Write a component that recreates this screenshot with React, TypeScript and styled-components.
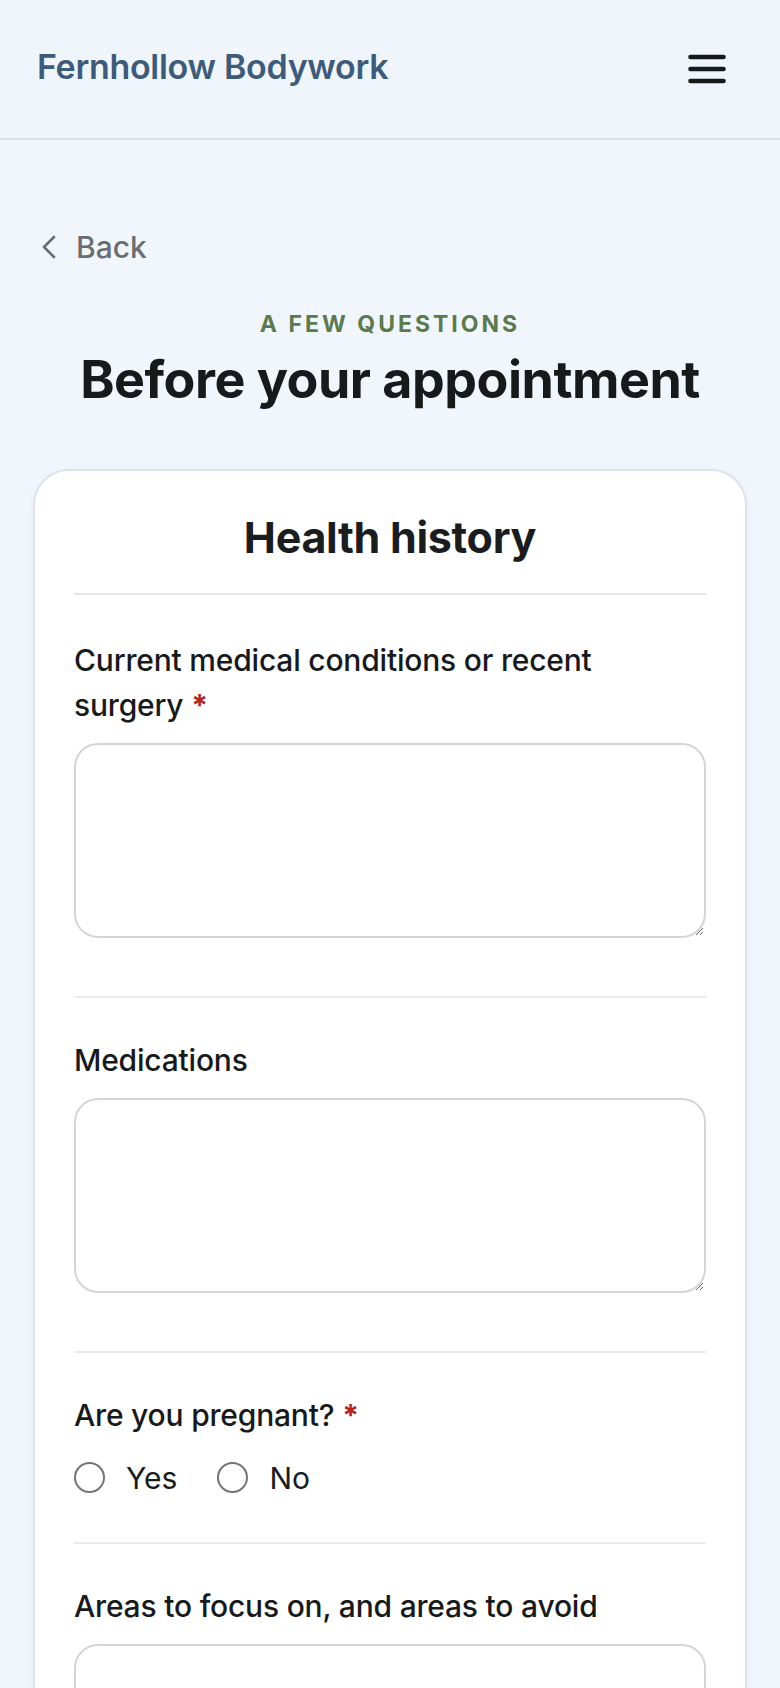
import React, { useState } from "react";
import styled, { createGlobalStyle } from "styled-components";

const GlobalStyle = createGlobalStyle`
  html, body {
    margin: 0;
    padding: 0;
    background: #f1f6fc;
  }
  body {
    font-family: Inter, "Noto Sans", "Liberation Sans", sans-serif;
    color: #1b1c1e;
  }
  * {
    box-sizing: border-box;
  }
`;

const Page = styled.div`
  min-height: 1688px;
  background: #f1f6fc;
`;

const TopBar = styled.header`
  height: 140px;
  display: flex;
  align-items: center;
  justify-content: space-between;
  padding: 0 54px 0 37px;
  border-bottom: 2px solid #dcdfe4;
  background: #f0f5fc;
`;

const Logo = styled.div`
  font-size: 34px;
  font-weight: 600;
  letter-spacing: -0.3px;
  color: #3e5c7a;
  margin-top: -6px;
`;

const MenuButton = styled.button`
  border: 0;
  background: none;
  padding: 0;
  display: flex;
  cursor: pointer;
`;

const Main = styled.main`
  padding: 88px 33px 40px;
`;

const BackLink = styled.a`
  display: inline-flex;
  align-items: center;
  gap: 19px;
  margin-left: 8px;
  font-size: 30px;
  font-weight: 500;
  line-height: 38px;
  color: #6b6d72;
  text-decoration: none;
`;

const Intro = styled.div`
  display: flex;
  flex-direction: column;
  align-items: center;
  margin-top: 41px;
`;

const Eyebrow = styled.div`
  font-size: 23px;
  line-height: 34px;
  font-weight: 700;
  letter-spacing: 3px;
  color: #5b7a4f;
`;

const Heading = styled.h1`
  margin: 9px 0 0;
  font-size: 52px;
  line-height: 60px;
  font-weight: 700;
  letter-spacing: -0.5px;
  color: #18191b;
`;

const Card = styled.section`
  margin-top: 59px;
  background: #ffffff;
  border: 2px solid #dfe3e9;
  border-radius: 36px;
  padding: 0 39px;
  box-shadow: 0 2px 8px rgba(30, 50, 80, 0.04);
`;

const CardTitle = styled.h2`
  margin: 0;
  padding: 40px 0 30px;
  text-align: center;
  font-size: 43px;
  line-height: 52px;
  font-weight: 700;
  letter-spacing: -0.3px;
  border-bottom: 2px solid #e3e5e9;
`;

const Field = styled.div<{ $first?: boolean }>`
  padding: ${(p) => (p.$first ? "43px" : "40px")} 0 44px;
  border-top: ${(p) => (p.$first ? "0" : "2px solid #e9ebee")};
`;

const Label = styled.label`
  display: block;
  font-size: 30px;
  line-height: 45px;
  font-weight: 500;
  letter-spacing: -0.2px;
  color: #18191b;
  margin-bottom: 15px;
`;

const Required = styled.span`
  color: #b3261e;
  font-weight: 700;
`;

const TextArea = styled.textarea`
  display: block;
  width: 100%;
  height: 195px;
  margin-bottom: 14px;
  border: 2px solid #d4d5d9;
  border-radius: 24px;
  background: #ffffff;
  padding: 16px 20px;
  font: inherit;
  font-size: 28px;
  outline: none;
`;

const RadioRow = styled.div`
  display: flex;
  align-items: center;
  gap: 40px;
  margin-top: 19px;
  height: 41px;
`;

const RadioOption = styled.label`
  display: flex;
  align-items: center;
  gap: 21px;
  font-size: 30px;
  font-weight: 400;
  color: #1b1c1e;
`;

const Radio = styled.input`
  appearance: none;
  margin: 0;
  width: 31px;
  height: 31px;
  border-radius: 50%;
  border: 2px solid #737477;
  background: #ffffff;
  &:checked {
    box-shadow: inset 0 0 0 6px #ffffff;
    background: #3e5c7a;
  }
`;

const ChevronLeft = () => (
  <svg width="16" height="24" viewBox="0 0 16 24" fill="none">
    <path
      d="M13 2 L3 12 L13 22"
      stroke="#6b6d72"
      strokeWidth="2.6"
      strokeLinecap="round"
      strokeLinejoin="round"
    />
  </svg>
);

const MenuIcon = () => (
  <svg width="38" height="30" viewBox="0 0 38 30" fill="none">
    <path
      d="M2.5 3h33M2.5 15h33M2.5 27h33"
      stroke="#18191b"
      strokeWidth="4.6"
      strokeLinecap="round"
    />
  </svg>
);

const App: React.FC = () => {
  const [pregnant, setPregnant] = useState<string>("");

  return (
    <Page>
      <GlobalStyle />
      <TopBar>
        <Logo>Fernhollow Bodywork</Logo>
        <MenuButton aria-label="Menu">
          <MenuIcon />
        </MenuButton>
      </TopBar>
      <Main>
        <BackLink href="#">
          <ChevronLeft />
          Back
        </BackLink>
        <Intro>
          <Eyebrow>A FEW QUESTIONS</Eyebrow>
          <Heading>Before your appointment</Heading>
        </Intro>
        <Card>
          <CardTitle>Health history</CardTitle>
          <Field $first>
            <Label>
              Current medical conditions or recent surgery{"\u00a0"}
              <Required>*</Required>
            </Label>
            <TextArea />
          </Field>
          <Field>
            <Label>Medications</Label>
            <TextArea />
          </Field>
          <Field>
            <Label>
              Are you pregnant?{"\u00a0"}
              <Required>*</Required>
            </Label>
            <RadioRow>
              {["Yes", "No"].map((option) => (
                <RadioOption key={option}>
                  <Radio
                    type="radio"
                    name="pregnant"
                    value={option}
                    checked={pregnant === option}
                    onChange={() => setPregnant(option)}
                  />
                  {option}
                </RadioOption>
              ))}
            </RadioRow>
          </Field>
          <Field>
            <Label>Areas to focus on, and areas to avoid</Label>
            <TextArea />
          </Field>
        </Card>
      </Main>
    </Page>
  );
};

export default App;
